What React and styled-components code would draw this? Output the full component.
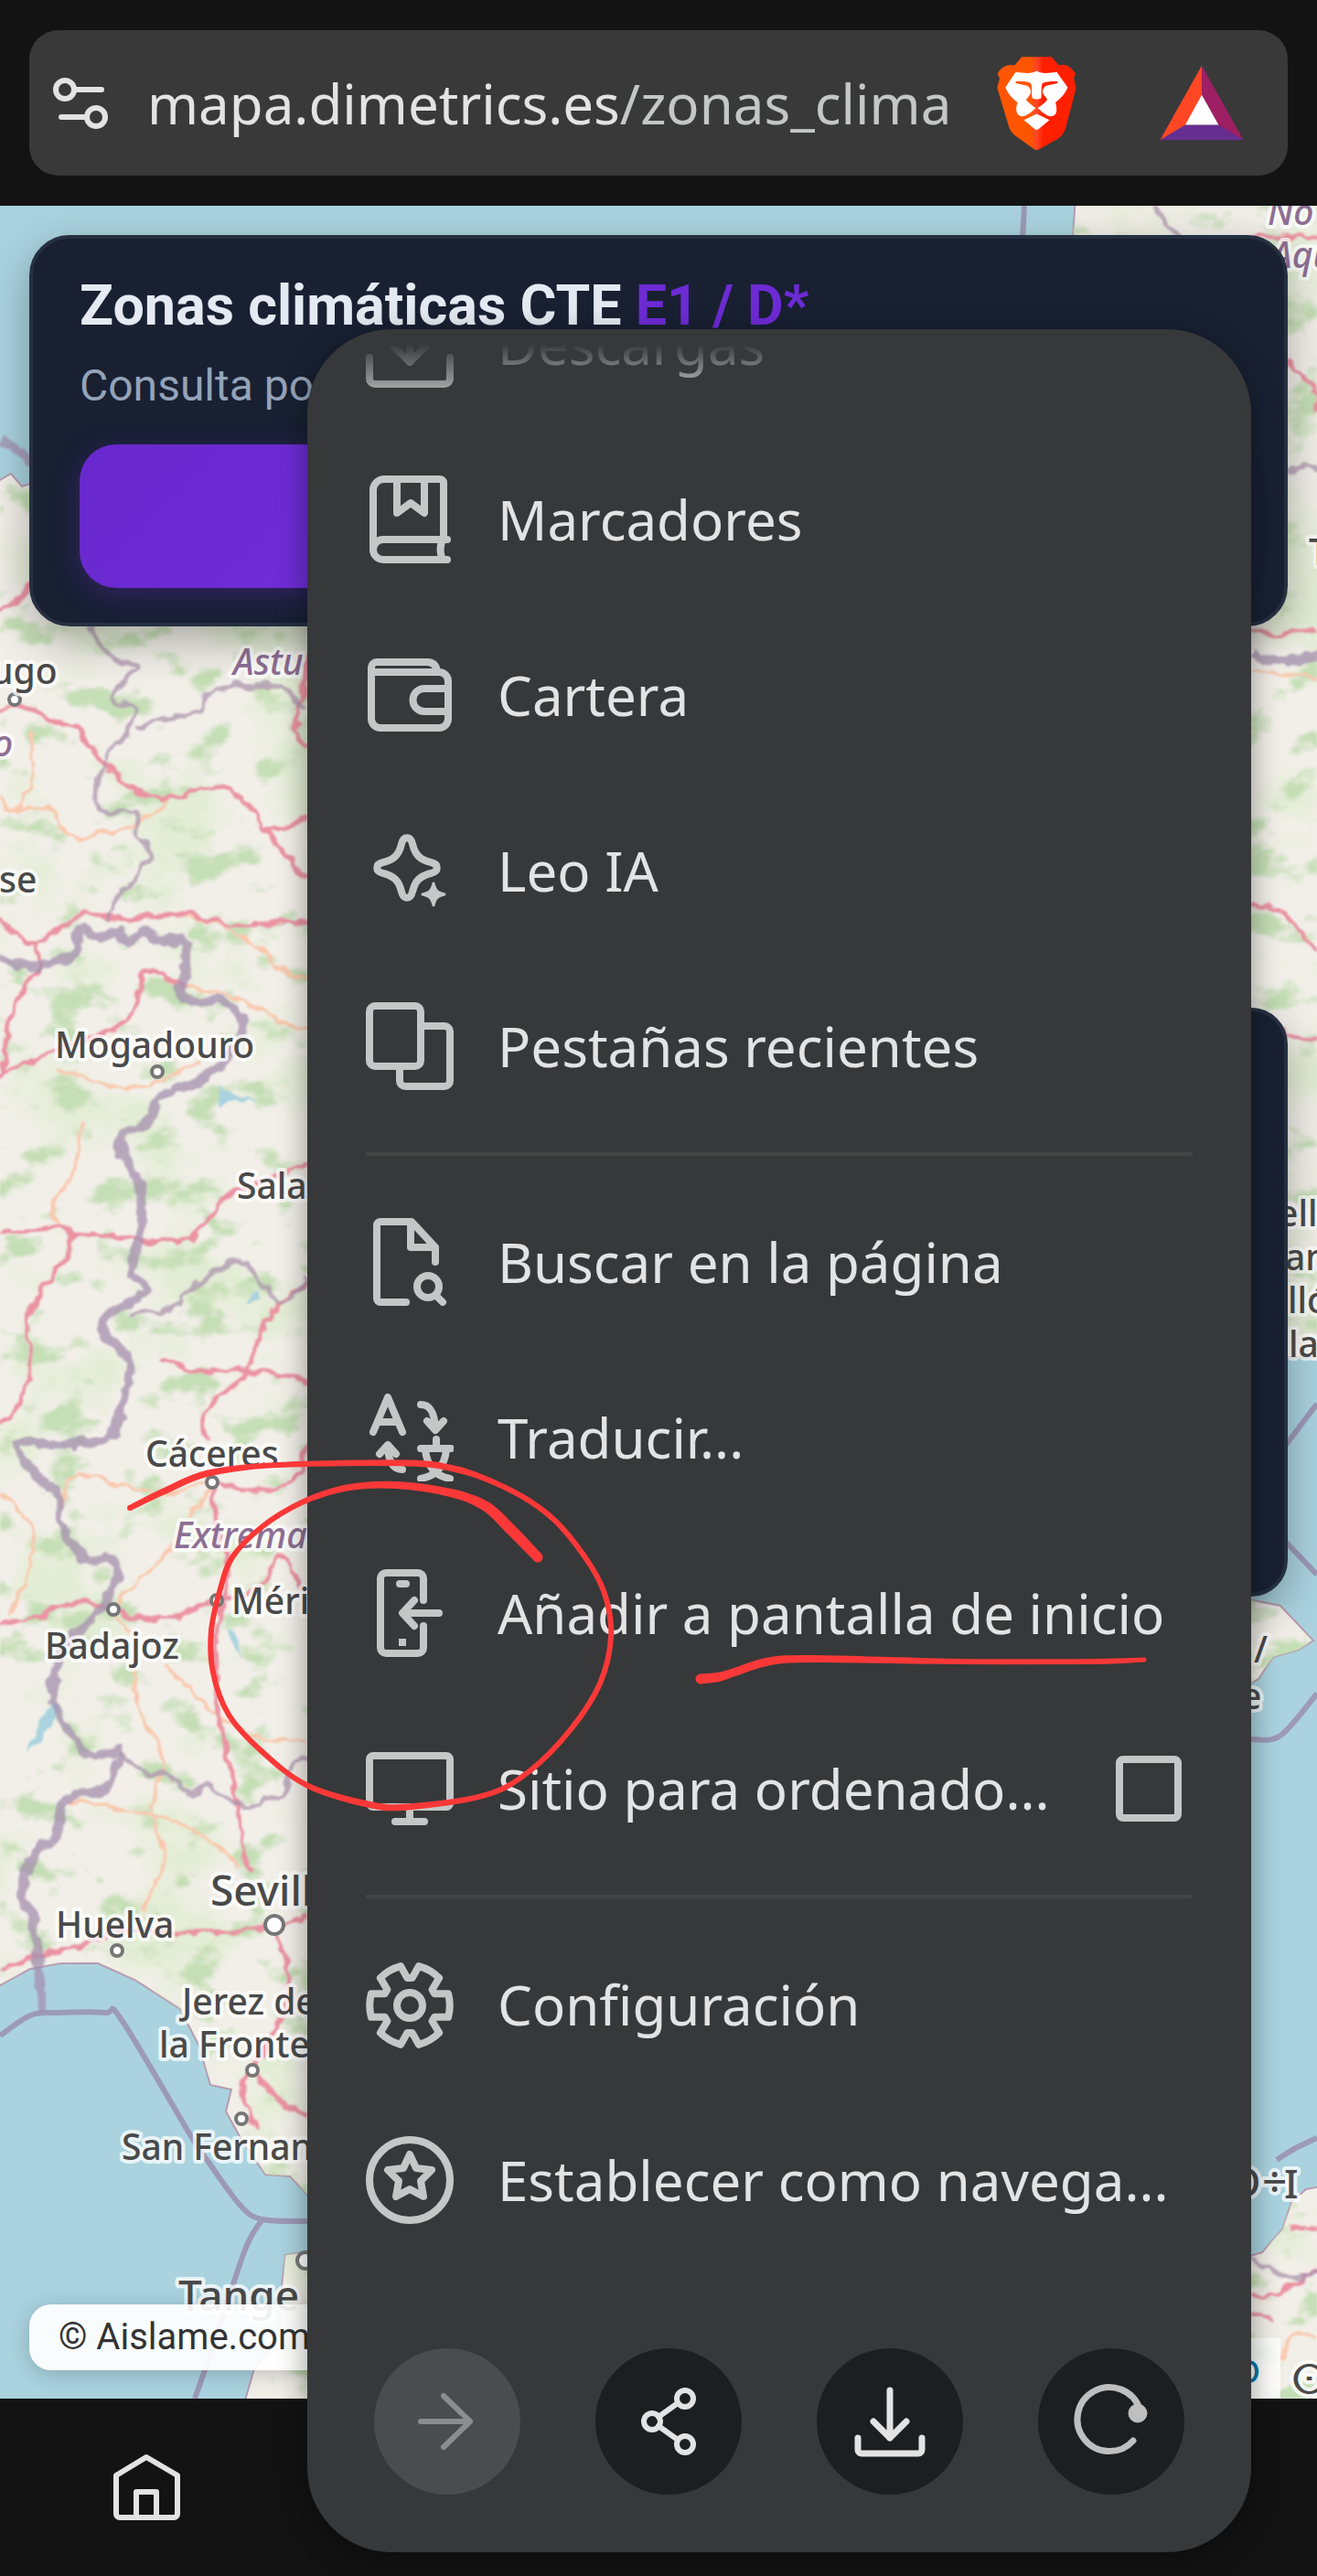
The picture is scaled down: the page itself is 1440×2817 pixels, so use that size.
import React, { useState } from 'react';

import styled, { createGlobalStyle, css } from 'styled-components';

const GlobalStyle = createGlobalStyle`
  * {
    box-sizing: border-box;
  }

  body {
    margin: 0;
    background: #131313;
  }
`;

const systemFont = "'Noto Sans', 'Open Sans', sans-serif";
const pageFont = 'Roboto, sans-serif';

const Screen = styled.div`
  position: relative;
  display: flex;
  flex-direction: column;
  min-height: 100vh;
  overflow: hidden;
  background: #131313;
  font-family: ${systemFont};
`;

const TopBar = styled.header`
  padding: 33px 32px;
`;

const AddressBar = styled.div`
  display: flex;
  align-items: center;
  height: 159px;
  padding: 0 48px 0 24px;
  border-radius: 32px;
  background: #393939;
`;

const BarButton = styled.button`
  display: flex;
  flex: none;
  padding: 0;
  border: none;
  background: none;
  color: #e3e3e3;
  cursor: pointer;
`;

const Url = styled.div`
  flex: 1;
  min-width: 0;
  margin: 0 42px 0 41px;
  overflow: hidden;
  color: #c5c6c6;
  font-size: 60px;
  line-height: 80px;
  white-space: nowrap;

  strong {
    color: #e3e3e3;
    font-weight: 400;
  }
`;

const RewardsButton = styled(BarButton)`
  margin-left: 91px;
`;

const MapArea = styled.main`
  position: relative;
  flex: 1;
  overflow: hidden;
  padding: 32px;
  background: #aad3df;
  font-family: ${pageFont};
`;

const MapCanvas = styled.svg`
  position: absolute;
  inset: 0;
  width: 100%;
  height: 100%;
  font-family: ${systemFont};
`;

const cardStyle = css`
  position: relative;
  border: 4px solid #253041;
  background: #182032;
  box-shadow: 0 16px 48px rgba(0, 0, 0, 0.3);
`;

const HeaderCard = styled.section`
  ${cardStyle}
  padding: 39px 51px 38px;
  border-radius: 44px;
`;

const Title = styled.h1`
  margin: 0;
  color: #e5eaf2;
  font-size: 61px;
  font-weight: 700;
  line-height: 68px;
  white-space: nowrap;

  span {
    color: #6d2bd5;
  }
`;

const Subtitle = styled.p`
  margin: 22px 0 32px;
  color: #94a3b8;
  font-size: 48px;
  line-height: 64px;
`;

const ZoneButton = styled.button`
  display: block;
  width: 100%;
  height: 157px;
  border: none;
  border-radius: 40px;
  background: linear-gradient(135deg, #6928cd, #7c3aed);
  box-shadow: 0 8px 32px rgba(109, 40, 217, 0.3);
`;

const LegendCard = styled.aside`
  ${cardStyle}
  width: 50%;
  height: 644px;
  margin: 417px 0 0 auto;
  border-radius: 40px;
`;

const Credit = styled.div`
  position: absolute;
  bottom: 31px;
  left: 32px;
  padding: 0 32px;
  border-radius: 24px;
  background: rgba(255, 255, 255, 0.92);
  box-shadow: 0 4px 24px rgba(0, 0, 0, 0.2);
  color: #333;
  font-size: 40px;
  line-height: 72px;
`;

const Attribution = styled.div`
  position: absolute;
  right: 40px;
  bottom: 0;
  padding: 0 22px;
  background: rgba(255, 255, 255, 0.8);
  font-size: 46px;
  line-height: 66px;

  a {
    color: #0078a8;
    text-decoration: none;
  }
`;

const NavBar = styled.nav`
  display: flex;
  align-items: center;
  height: 194px;
  padding: 0 116px;
`;

const Menu = styled.div`
  position: absolute;
  top: 360px;
  right: 72px;
  bottom: 26px;
  left: 336px;
  display: flex;
  flex-direction: column;
  border-radius: 92px;
  background: #373839;
  box-shadow: 0 8px 32px rgba(0, 0, 0, 0.4);
`;

/* scrolled to its end, so the first row runs out under the fade */
const MenuList = styled.div`
  display: flex;
  flex: 1;
  flex-direction: column;
  justify-content: flex-end;
  min-height: 0;
  margin-top: 16px;
  overflow: hidden;
  mask-image: linear-gradient(transparent, #000 64px);
`;

const rowStyle = css`
  display: flex;
  flex: none;
  align-items: center;
  gap: 48px;
  height: 192px;
  padding: 0 64px;
  color: #e3e3e3;
  font-family: ${systemFont};
  font-size: 60px;
  line-height: 80px;
  text-align: left;
  white-space: nowrap;
`;

const MenuItem = styled.button`
  ${rowStyle}
  border: none;
  background: none;
  cursor: pointer;
`;

const MenuToggle = styled.label`
  ${rowStyle}
  padding-right: 76px;

  span {
    flex: 1;
  }
`;

const Checkbox = styled.input`
  appearance: none;
  width: 72px;
  height: 72px;
  margin: 0;
  border: 8px solid #c5c6c6;
  border-radius: 8px;

  &:checked {
    background: #c5c6c6;
  }
`;

const Divider = styled.hr`
  flex: none;
  height: 4px;
  margin: 20px 64px;
  border: none;
  background: #444646;
`;

const MenuActions = styled.div`
  display: flex;
  justify-content: space-between;
  padding: 88px 73px 63px;
`;

const ActionButton = styled.button`
  display: flex;
  width: 160px;
  height: 160px;
  padding: 0;
  border: none;
  border-radius: 50%;
  background: ${({ disabled }) => (disabled ? '#4b4c4d' : '#1d1e1f')};
  color: ${({ $color }) => $color};
`;

const Stroke = styled.svg`
  flex: none;
  width: ${({ $size }) => $size}px;
  height: ${({ $size }) => $size}px;
  fill: none;
  stroke: ${({ $color }) => $color || 'currentColor'};
  stroke-width: ${({ $weight }) => $weight || 8}px;
  stroke-linecap: round;
  stroke-linejoin: round;
`;

const Drawing = styled.svg`
  position: absolute;
  top: 1560px;
  left: 120px;
  width: 1160px;
  height: 440px;
  fill: #fb3838;
  stroke: #fb3838;
  stroke-width: 2px;
  stroke-linejoin: round;
  pointer-events: none;
`;

/* Catmull-Rom curve through a list of points */
const curve = (points) => {
  let d = `M${points[0]}`;
  for (let i = 0; i < points.length - 1; i += 1) {
    const p0 = points[i - 1] || points[i];
    const p1 = points[i];
    const p2 = points[i + 1];
    const p3 = points[i + 2] || p2;
    d += `C${p1[0] + (p2[0] - p0[0]) / 6},${p1[1] + (p2[1] - p0[1]) / 6} `;
    d += `${p2[0] - (p3[0] - p1[0]) / 6},${p2[1] - (p3[1] - p1[1]) / 6} ${p2}`;
  }
  return d;
};

/* outline of a pen stroke whose points are [x, y, width] */
const penStroke = (points) => {
  const side = (sign) =>
    points.map(([x, y, w], i) => {
      const [ax, ay] = points[i - 1] || points[i];
      const [bx, by] = points[i + 1] || points[i];
      const length = Math.hypot(bx - ax, by - ay);
      const r = (sign * (w - 2)) / 2;
      return [x - ((by - ay) / length) * r, y + ((bx - ax) / length) * r];
    });
  return `${curve(side(1))}${curve(side(-1).reverse()).replace('M', 'L')}Z`;
};

const PenStroke = ({ points }) => {
  const ends = [points[0], points[points.length - 1]];
  return (
    <>
      <path d={penStroke(points)} />
      {ends.map(([x, y, w]) => (
        <circle key={x} cx={x} cy={y} r={(w - 2) / 2} />
      ))}
    </>
  );
};

const gearPath = () => {
  const at = (deg, r) => {
    const a = (deg * Math.PI) / 180;
    return `${48 + r * Math.cos(a)} ${49 + r * Math.sin(a)}`;
  };
  let d = '';
  for (let t = 0; t < 360; t += 60) {
    d += `${t ? 'L' : 'M'}${at(t - 25, 30)}L${at(t - 17, 44)}`;
    d += `A50 50 0 0 1 ${at(t + 17, 44)}L${at(t + 25, 30)}`;
  }
  return `${d}Z`;
};

const icons = {
  downloads: <path d='M4 63v23a6 6 0 0 0 6 6h76a6 6 0 0 0 6-6V63M48 0v68M22 42l26 26 26-26' />,
  bookmarks: (
    <>
      <path d='M85 70V8a4 4 0 0 0-4-4H20A12 12 0 0 0 8 16v65a11 11 0 0 0 11 11h70' />
      <path d='M89 70H19A11 11 0 0 0 8 81M84 70q-5 11 0 22' />
      <path d='M34 4v37l15-11 15 11V4' />
    </>
  ),
  wallet: (
    <>
      <path d='M78 22c-1-6-4-10-11-10H12a6 6 0 0 0-6 6v56a10 10 0 0 0 10 10h64a10 10 0 0 0 10-10V33a10 10 0 0 0-10-10H7' />
      <path d='M90 41H64a12 12 0 0 0 0 25h26' />
    </>
  ),
  leo: (
    <>
      <path d='M39 19c2-9 10-9 12 0 3 12 8 17 20 20 9 2 9 10 0 12-12 3-17 8-20 20-2 9-10 9-12 0-3-12-8-17-20-20-9-2-9-10 0-12 12-3 17-8 20-20z' />
      <path
        d='M74 62c2 8 4 10 12 12-8 2-10 4-12 12-2-8-4-10-12-12 8-2 10-4 12-12z'
        fill='currentColor'
        strokeWidth='3'
      />
    </>
  ),
  tabs: (
    <>
      <rect x='4' y='4' width='56' height='66' rx='6' />
      <path d='M62 26h24a6 6 0 0 1 6 6v54a6 6 0 0 1-6 6H43a6 6 0 0 1-6-6V72' />
    </>
  ),
  find: (
    <>
      <path d='M76 48V32L50 4H16a4 4 0 0 0-4 4v80a4 4 0 0 0 4 4h28M49 4v28h27' />
      <circle cx='68' cy='75' r='12' />
      <path d='M77 85l7 7' />
    </>
  ),
  translate: (
    <>
      <path d='M8 42L24 4l16 38M14 31h20' />
      <path d='M60 12c10 0 15 8 16 26M67 30l9 10 9-10' />
      <path d='M40 83c-10 0-15-8-16-24M15 66l9-10 9 10' />
      <path d='M77 50v9M60 60h33M65 62c2 16 10 28 27 31M88 62c-2 16-10 28-28 31' />
    </>
  ),
  install: (
    <>
      <path d='M63 34V10a6 6 0 0 0-6-6H22a6 6 0 0 0-6 6v76a6 6 0 0 0 6 6h35a6 6 0 0 0 6-6V62' />
      <path d='M80 48H42M53 34L40 48l13 14M37 16h7' />
      <path d='M40 76v8' strokeLinecap='butt' />
    </>
  ),
  desktop: (
    <>
      <rect x='4' y='12' width='88' height='56' rx='4' />
      <path d='M48 68v16M32 84h32' />
    </>
  ),
  settings: (
    <>
      <path d={gearPath()} />
      <circle cx='48' cy='49' r='14' />
    </>
  ),
  star: (
    <>
      <circle cx='48' cy='48' r='44' />
      <path d='M48 20l7 15 17 2-12 12 3 17-15-8-15 8 3-17-12-12 17-2z' />
    </>
  ),
};

const MenuIcon = ({ name }) => (
  <Stroke $size={96} $color='#c5c6c6' viewBox='0 0 96 96' aria-hidden='true' color='#c5c6c6'>
    {icons[name]}
  </Stroke>
);

const land = [
  'M-9 530L12 518L24 532L60 520L1168 330L1176 215H1449V1484H1400L1300 1500L1000 2200L340 2404L317 2380L290 2378L263 2338L247 2309L253 2285L230 2280L217 2236L197 2197L147 2165L107 2147L67 2147L33 2153L-9 2176Z',
  'M266 2632L278 2590L304 2560L308 2500L312 2466L350 2460V2632Z',
  'M1350 2472L1380 2463L1402 2438L1412 2408L1428 2394L1449 2390V2632H1350Z',
  'M1360 1748L1400 1756L1436 1794L1420 1804L1392 1812L1376 1836L1360 1845Z',
];

const roads = [
  [[0, 777], [22, 772], [50, 785], [82, 792], [100, 818], [120, 842], [158, 870], [200, 871], [218, 861], [255, 865], [290, 905], [315, 938], [336, 960]],
  [[290, 905], [320, 903], [336, 893]],
  [[336, 715], [328, 780], [322, 800], [336, 818]],
  [[0, 1005], [35, 1032], [60, 1018], [95, 1000], [140, 1004], [200, 999], [250, 1010], [336, 1009]],
  [[40, 1032], [42, 1058], [15, 1100], [0, 1180]],
  [[0, 1175], [55, 1152], [140, 1114], [158, 1062], [200, 1080]],
  [[0, 1348], [70, 1344], [77, 1365], [30, 1440], [34, 1490], [20, 1535], [0, 1558]],
  [[77, 1360], [95, 1350], [200, 1356], [250, 1308], [336, 1273]],
  [[336, 1402], [290, 1445], [272, 1498], [228, 1540], [225, 1575]],
  [[177, 1486], [210, 1498], [290, 1500], [336, 1514]],
  [[232, 1621], [238, 1680], [250, 1710], [235, 1800], [240, 1880], [258, 1960], [264, 2020], [275, 2045]],
  [[232, 1621], [270, 1630], [318, 1622], [336, 1580]],
  [[0, 1774], [40, 1770], [85, 1752], [124, 1762], [180, 1770], [237, 1750], [280, 1740], [308, 1700], [330, 1740]],
  [[0, 2155], [40, 2138], [80, 2130], [128, 2112], [200, 2113], [290, 2110], [336, 2096]],
  [[300, 2105], [315, 2160], [312, 2200], [276, 2262], [266, 2290], [280, 2330]],
  [[276, 2264], [310, 2300], [336, 2314]],
  [[1368, 690], [1400, 694], [1440, 688]],
  [[1405, 398], [1420, 408], [1436, 425], [1440, 450]],
  [[1360, 258], [1400, 258], [1440, 262]],
  [[1368, 990], [1400, 995], [1440, 1040]],
  [[1400, 1128], [1420, 1136], [1440, 1138]],
  [[1368, 2512], [1400, 2506], [1430, 2488], [1440, 2484]],
  [[1410, 2435], [1428, 2436], [1440, 2438]],
  [[1368, 2530], [1380, 2532], [1392, 2538]],
  [[0, 668], [20, 655], [60, 620]],
];

const minorRoads = [
  [[34, 800], [36, 850], [15, 886], [0, 872]],
  [[15, 886], [50, 884], [80, 915], [150, 900], [190, 870]],
  [[60, 1170], [100, 1182], [150, 1190], [220, 1160]],
  [[92, 1228], [80, 1280], [57, 1320], [66, 1345]],
  [[200, 1000], [260, 1020], [310, 1062], [336, 1070]],
  [[200, 1078], [260, 1092], [310, 1118], [336, 1122]],
  [[0, 1634], [35, 1668], [30, 1720], [10, 1768]],
  [[66, 1650], [82, 1614], [130, 1622], [180, 1632], [232, 1621]],
  [[232, 1621], [180, 1700], [124, 1760], [146, 1790], [150, 1860], [178, 1920], [166, 1985], [180, 2030], [155, 2090]],
  [[76, 1970], [160, 1984], [210, 2000], [262, 2040]],
  [[180, 1820], [230, 1870], [290, 1902], [336, 1905]],
  [[1368, 735], [1410, 738], [1440, 742]],
  [[1400, 2580], [1416, 2552], [1440, 2560]],
];

const borders = [
  [[0, 1047], [13, 1053], [43, 1056], [82, 1042], [85, 1018], [113, 1024], [130, 1018], [140, 1030], [160, 1018], [173, 1030], [200, 1028], [204, 1050], [198, 1088], [217, 1095], [243, 1095], [267, 1117], [253, 1146], [227, 1178], [180, 1197], [160, 1229], [130, 1248], [150, 1292], [155, 1337], [145, 1388], [158, 1413], [117, 1439], [115, 1461], [142, 1490], [137, 1528], [117, 1573], [57, 1579], [20, 1576], [33, 1605], [63, 1637], [67, 1668], [94, 1706], [116, 1703], [127, 1722], [107, 1764], [72, 1800], [58, 1860], [100, 1921], [129, 1913], [116, 1955], [74, 1967], [62, 2005], [40, 2024], [25, 2066], [36, 2100], [42, 2148], [47, 2200]],
  [[0, 484], [20, 492], [34, 505]],
  [[1368, 715], [1395, 724], [1440, 716]],
];

const seaBorders = [
  [[0, 2226], [33, 2204], [60, 2201], [115, 2201], [133, 2209], [210, 2338], [227, 2363], [263, 2412], [287, 2427], [336, 2429]],
  [[287, 2427], [268, 2460], [235, 2560], [213, 2623]],
  [[1120, 225], [1118, 260]],
  [[1396, 2362], [1415, 2350], [1440, 2338]],
  [[1368, 1902], [1400, 1898], [1440, 1852]],
  [[1400, 1588], [1440, 1535]],
  [[1400, 1680], [1440, 1722]],
];

const thinBorders = [
  [[98, 684], [125, 722], [150, 730], [122, 762], [145, 775], [140, 800], [112, 838], [106, 886], [148, 888], [150, 915], [165, 930], [150, 958], [125, 985], [118, 1005]],
  [[150, 795], [190, 785], [215, 778], [235, 755], [290, 750], [310, 755], [336, 775]],
  [[140, 1438], [195, 1430], [200, 1415], [258, 1380], [285, 1405], [310, 1425], [336, 1400]],
  [[129, 1916], [155, 1935], [190, 1945], [210, 1965], [225, 1950], [265, 1975], [308, 1960], [322, 1925], [336, 1920]],
  [[1260, 225], [1290, 262]],
  [[1368, 2468], [1395, 2485], [1412, 2490], [1440, 2485]],
  [[1408, 518], [1432, 510], [1440, 514]],
];

const cities = [
  [16, 765], [172, 1172], [232, 1621], [237, 1750], [124, 1760], [128, 2133], [276, 2264], [264, 2317],
];

const labels = [
  { x: -10, y: 748, text: 'ugo' },
  { x: -1, y: 976, text: 'se' },
  { x: 60, y: 1157, text: 'Mogadouro' },
  { x: 259, y: 1311, text: 'Sala' },
  { x: 159, y: 1604, text: 'Cáceres' },
  { x: 253, y: 1765, text: 'Méri' },
  { x: 49, y: 1814, text: 'Badajoz' },
  { x: 230, y: 2084, text: 'Sevill', size: 46 },
  { x: 61, y: 2119, text: 'Huelva' },
  { x: 199, y: 2203, text: 'Jerez de' },
  { x: 174, y: 2250, text: 'la Fronte' },
  { x: 133, y: 2362, text: 'San Fernan' },
  { x: 195, y: 2527, text: 'Tange', size: 46 },
  { x: 1431, y: 618, text: 'T' },
  { x: 1397, y: 1341, text: 'elló' },
  { x: 1405, y: 1389, text: 'an' },
  { x: 1408, y: 1436, text: 'lló' },
  { x: 1409, y: 1484, text: 'la' },
  { x: 1371, y: 1818, text: '/' },
  { x: 1357, y: 1869, text: 'e' },
  { x: 1344, y: 2402, text: 'O', size: 44 },
  { x: 1380, y: 2403, text: '÷', size: 48 },
  { x: 1404, y: 2404, text: 'I', size: 44 },
  { x: 1412, y: 2618, text: 'ⵙ', size: 44 },
  { x: -8, y: 827, text: 'o', region: true },
  { x: 255, y: 738, text: 'Astu', region: true },
  { x: 190, y: 1693, text: 'Extrema', region: true },
  { x: 1386, y: 246, text: 'No', region: true },
  { x: 1390, y: 293, text: 'Aqu', region: true },
];

const Lines = ({ items, ...props }) => (
  <g fill='none' strokeLinejoin='round' {...props}>
    {items.map((points, i) => (
      <path key={i} d={curve(points)} />
    ))}
  </g>
);

const BaseMap = () => (
  <MapCanvas viewBox='0 225 1440 2398' preserveAspectRatio='xMidYMin slice'>
    <defs>
      <filter id='forest' x='0' y='0' width='100%' height='100%' colorInterpolationFilters='sRGB'>
        <feTurbulence type='fractalNoise' baseFrequency='0.02 0.028' numOctaves='4' seed='11' />
        <feColorMatrix values='0 0 0 0 0.77  0 0 0 0 0.87  0 0 0 0 0.71  6 0 0 0 -3.4' />
        <feGaussianBlur stdDeviation='1' />
      </filter>
      <filter id='meadow' x='0' y='0' width='100%' height='100%' colorInterpolationFilters='sRGB'>
        <feTurbulence type='fractalNoise' baseFrequency='0.008 0.011' numOctaves='5' seed='4' />
        <feColorMatrix values='0 0 0 0 0.88  0 0 0 0 0.93  0 0 0 0 0.82  5 0 0 0 -2.6' />
      </filter>
      {/* roughens the roads and borders */}
      <filter
        id='rough'
        filterUnits='userSpaceOnUse'
        x='-10'
        y='215'
        width='1460'
        height='2418'
      >
        <feTurbulence type='fractalNoise' baseFrequency='0.06' numOctaves='2' seed='3' result='noise' />
        <feDisplacementMap in='SourceGraphic' in2='noise' scale='14' xChannelSelector='R' yChannelSelector='G' />
        <feGaussianBlur stdDeviation='1' />
      </filter>
      <clipPath id='land'>
        {land.map((d) => (
          <path key={d} d={d} />
        ))}
      </clipPath>
    </defs>
    {land.map((d) => (
      <path key={d} d={d} fill='#f2efe9' stroke='#b79bb0' strokeWidth='2' />
    ))}
    <g clipPath='url(#land)'>
      <rect y='225' width='1440' height='2398' filter='url(#meadow)' opacity='0.8' />
      <rect y='225' width='1440' height='2398' filter='url(#forest)' />
    </g>
    <g fill='#aad3df' filter='url(#rough)'>
      <path d='M240 1185l14 10 26 12-22-3-14 8-4-14zM270 1420l12-10 2 10-14 4zM58 1862l-8 10-14 28-8 16 14-8 16-30 8-14zM248 1780l10 4 6 28-8-10z' />
    </g>
    <g filter='url(#rough)'>
      <Lines items={minorRoads} stroke='#f9c9ae' strokeWidth='4' />
      <Lines items={roads} stroke='#eb93a2' strokeWidth='5' />
      <Lines items={thinBorders} stroke='#ac94ae' strokeWidth='5' opacity='0.75' />
      <Lines items={borders} stroke='#a58fae' strokeWidth='10' opacity='0.75' />
    </g>
    <Lines items={seaBorders} stroke='#9a8fb0' strokeWidth='6' opacity='0.85' />
    {cities.map(([x, y]) => (
      <circle key={y} cx={x} cy={y} r='6' fill='#fff' stroke='#777' strokeWidth='4' />
    ))}
    <circle cx='300' cy='2105' r='10' fill='#fff' stroke='#777' strokeWidth='4' />
    <circle cx='334' cy='2472' r='9' fill='#fff' stroke='#777' strokeWidth='4' />
    {labels.map(({ x, y, text, size = 39, region }) => (
      <text
        key={y}
        x={x}
        y={y}
        fontSize={size}
        fontStyle={region ? 'italic' : 'normal'}
        fontWeight='500'
        fill={region ? '#8d6f94' : '#4a4a4a'}
        stroke='rgba(255, 255, 255, 0.75)'
        strokeWidth='8'
        strokeLinejoin='round'
        paintOrder='stroke'
      >
        {text}
      </text>
    ))}
  </MapCanvas>
);

const SettingsIcon = () => (
  <Stroke $size={64} $weight={6} viewBox='56 81 64 64' aria-hidden='true'>
    <circle cx='71' cy='98' r='10' />
    <path d='M82 98h29M67 128h27' />
    <circle cx='105' cy='128' r='10' />
  </Stroke>
);

const BraveLogo = () => (
  <svg width='87' height='104' viewBox='150 93 262 312' aria-hidden='true'>
    <defs>
      <linearGradient id='brave'>
        <stop offset='0.42' stopColor='#ff5500' />
        <stop offset='0.5' stopColor='#ff4525' />
        <stop offset='0.58' stopColor='#ff2000' />
      </linearGradient>
    </defs>
    <path
      fill='url(#brave)'
      d='M232 96h98l24 28c20-6 38 2 55 28l-6 14 8 32-34 130c-5 18-12 28-26 38l-62 34q-8 5-16 0l-62-44c-10-8-18-18-22-32l-38-126 8-32-7-14c12-24 34-34 56-28z'
    />
    <path
      fill='#fff'
      d='M281 142c12 8 28 10 66 4l36 50c-10 26-24 36-40 50 4 18 10 44-16 46-12 0-28-14-43-27 14-10 24-18 32-28l-6-10c-14-12-12-26 2-36l38-8v-6c-18-1-38 0-50 6-6 16-2 36-4 48-6 6-22 6-30 0-2-14 0-34-4-48-12-6-32-8-50-6v6l38 8c14 10 16 24 4 36l-8 10c8 10 20 18 32 28-14 13-30 27-46 27-22-4-20-28-14-46-16-14-30-24-40-50l34-50c40 6 56 4 69-4z'
    />
    <path fill='#fff' d='M281 284l42 20-36 30q-6 4-12 0l-36-30z' />
  </svg>
);

const RewardsLogo = () => (
  <svg width='92' height='83' viewBox='684 122 276 248' aria-hidden='true'>
    <path fill='#ff4724' d='M822 124v98l-54 98-83 48z' />
    <path fill='#9e1f63' d='M822 124l137 244-82-48-55-98z' />
    <path fill='#662d91' d='M685 368l83-50h109l82 50z' />
    <path fill='#fff' d='M822 220l55 98H768z' />
  </svg>
);

const HomeIcon = () => (
  <Stroke $size={88} $weight={6} $color='#e3e3e3' viewBox='116 2675 88 88' aria-hidden='true'>
    <path d='M127 2706l33-20 34 20v42a4 4 0 0 1-4 4h-59a4 4 0 0 1-4-4z' />
    <path d='M149 2752v-28h22v28' />
  </Stroke>
);

const circleStroke = [
  [142, 1649, 6], [181, 1630, 7], [228, 1611, 7], [304, 1602, 6], [446, 1600, 7], [500, 1607, 7], [540, 1621, 6], [580, 1642, 6], [612, 1668, 6], [647, 1714, 6], [663, 1749, 6], [668, 1791, 6], [656, 1841, 6], [625, 1890, 6], [580, 1936, 6], [531, 1963, 6], [446, 1976, 7], [402, 1973, 7], [335, 1952, 6], [286, 1915, 6], [250, 1875, 6], [233, 1829, 6], [231, 1783, 6], [241, 1737, 6], [254, 1703, 6], [286, 1670, 6], [330, 1643, 6], [379, 1627, 7], [433, 1624, 8], [495, 1633, 9], [531, 1647, 11], [558, 1672, 12], [588, 1703, 11],
];

const underline = [
  [766, 1836, 11], [785, 1834, 10], [802, 1829, 9], [840, 1817, 9], [891, 1814, 8], [1051, 1817, 6], [1197, 1817, 6], [1251, 1815, 5],
];

const Annotations = () => (
  <Drawing viewBox='120 1560 1160 440' aria-hidden='true'>
    <PenStroke points={circleStroke} />
    <PenStroke points={underline} />
  </Drawing>
);

const topItems = [
  { icon: 'downloads', label: 'Descargas' },
  { icon: 'bookmarks', label: 'Marcadores' },
  { icon: 'wallet', label: 'Cartera' },
  { icon: 'leo', label: 'Leo IA' },
  { icon: 'tabs', label: 'Pestañas recientes' },
];

const pageItems = [
  { icon: 'find', label: 'Buscar en la página' },
  { icon: 'translate', label: 'Traducir...' },
  { icon: 'install', label: 'Añadir a pantalla de inicio' },
];

const browserItems = [
  { icon: 'settings', label: 'Configuración' },
  { icon: 'star', label: 'Establecer como navega...' },
];

const renderItem = ({ icon, label }) => (
  <MenuItem key={icon} type='button'>
    <MenuIcon name={icon} />
    {label}
  </MenuItem>
);

const App = () => {
  const [desktopSite, setDesktopSite] = useState(false);

  return (
    <>
      <GlobalStyle />
      <Screen>
        <TopBar>
          <AddressBar>
            <BarButton type='button' aria-label='Información del sitio'>
              <SettingsIcon />
            </BarButton>
            <Url>
              <strong>mapa.dimetrics.es</strong>/zonas_clima
            </Url>
            <BarButton type='button' aria-label='Brave Shields'>
              <BraveLogo />
            </BarButton>
            <RewardsButton type='button' aria-label='Brave Rewards'>
              <RewardsLogo />
            </RewardsButton>
          </AddressBar>
        </TopBar>

        <MapArea>
          <BaseMap />
          <HeaderCard>
            <Title>
              Zonas climáticas CTE <span>E1 / D*</span>
            </Title>
            <Subtitle>Consulta po</Subtitle>
            <ZoneButton type='button' aria-label='Consultar' />
          </HeaderCard>
          <LegendCard />
          <Credit>© Aislame.com</Credit>
          <Attribution>
            <a href='#mapa'>o</a>
          </Attribution>
        </MapArea>

        <NavBar>
          <BarButton type='button' aria-label='Inicio'>
            <HomeIcon />
          </BarButton>
        </NavBar>

        <Menu>
          <MenuList>
            {topItems.map(renderItem)}
            <Divider />
            {pageItems.map(renderItem)}
            <MenuToggle>
              <MenuIcon name='desktop' />
              <span>Sitio para ordenado...</span>
              <Checkbox
                type='checkbox'
                checked={desktopSite}
                onChange={(e) => setDesktopSite(e.target.checked)}
              />
            </MenuToggle>
            <Divider />
            {browserItems.map(renderItem)}
          </MenuList>
          <MenuActions>
            <ActionButton type='button' aria-label='Adelante' $color='#8c8d8e' disabled>
              <Stroke $size={160} $weight={6} viewBox='0 0 160 160'>
                <path d='M51 80h54M76 52l29 28-29 28' />
              </Stroke>
            </ActionButton>
            <ActionButton type='button' aria-label='Compartir' $color='#e3e3e3'>
              <Stroke $size={160} $weight={6} viewBox='0 0 160 160'>
                <circle cx='62' cy='80' r='9' />
                <circle cx='98' cy='55' r='9' />
                <circle cx='98' cy='105' r='9' />
                <path d='M69 75l21-15M69 85l21 15' />
              </Stroke>
            </ActionButton>
            <ActionButton type='button' aria-label='Descargar' $color='#e3e3e3'>
              <Stroke $size={160} $weight={7} viewBox='0 0 160 160'>
                <path d='M80 46v52M62 80l18 18 18-18M45 98v13a4 4 0 0 0 4 4h62a4 4 0 0 0 4-4V98' />
              </Stroke>
            </ActionButton>
            <ActionButton type='button' aria-label='Recargar' $color='#bfbfbf'>
              <Stroke $size={160} $weight={7} viewBox='0 0 160 160'>
                <path d='M111 66A35 35 0 1 0 104 101' />
                <circle cx='109' cy='71' r='10' fill='currentColor' strokeWidth='1' />
              </Stroke>
            </ActionButton>
          </MenuActions>
        </Menu>

        <Annotations />
      </Screen>
    </>
  );
};

export default App;
